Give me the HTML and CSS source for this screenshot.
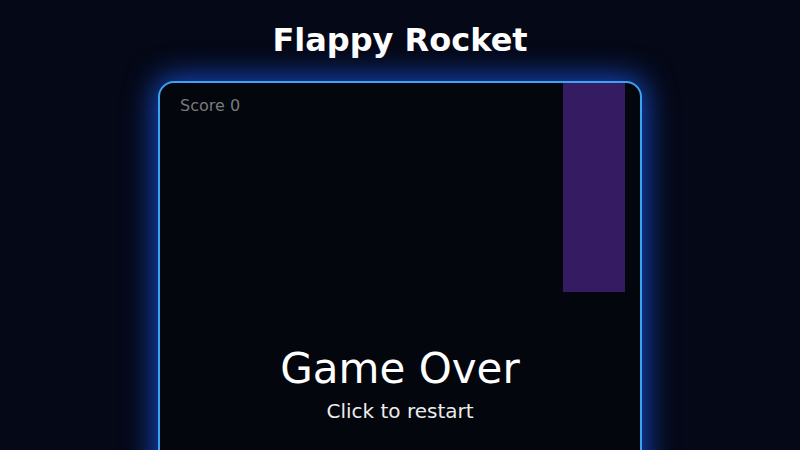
FILE: index.html
```html
<!DOCTYPE html>
<html lang="en">
<head>
    <meta charset="UTF-8">
    <meta name="viewport" content="width=device-width, initial-scale=1.0">
    <title>Flappy Rocket</title>
    <link rel="stylesheet" href="styles.css">
</head>
<body>
    <div id="container">
        <header>Flappy Rocket</header>

        <!-- game board -->
        <div id="game">
            <div class="score">Score 0</div>
            <div class="pipe" style="left: 403px; top: 0; height: 209px;"></div>
            <div class="overlay">
                <div class="title">Game Over</div>
                <div class="hint">Click to restart</div>
            </div>
        </div>
    </div>
</body>
</html>
```

FILE: styles.css
```css
html, body {
    margin: 0;
    padding: 0;
    background: #050816;
    color: #fff;
    font-family: "DejaVu Sans", sans-serif;
    overflow: hidden;
}
#container {
    display: flex;
    flex-direction: column;
    align-items: center;
}
header {
    font-size: 32px;
    font-weight: bold;
    line-height: 40px;
    margin: 20px 0 21px;
}
#game {
    position: relative;
    width: 480px;
    height: 600px;
    border: 2px solid #3ea2f2;
    border-radius: 16px;
    background: #03060d;
    box-shadow: 0 0 30px 4px rgba(25, 95, 250, 0.75);
    overflow: hidden;
}
.score {
    position: absolute;
    left: 20px;
    top: 13px;
    font-size: 16px;
    line-height: 20px;
    color: #7a7a7a;
}
.pipe {
    position: absolute;
    width: 62px;
    background: #351b61;
}
.overlay {
    position: absolute;
    top: 261px;
    left: 0;
    right: 0;
    display: flex;
    flex-direction: column;
    align-items: center;
    gap: 5px;
}
.title {
    font-size: 42px;
    line-height: 50px;
}
.hint {
    font-size: 20px;
    line-height: 24px;
    color: #ececec;
}
```
